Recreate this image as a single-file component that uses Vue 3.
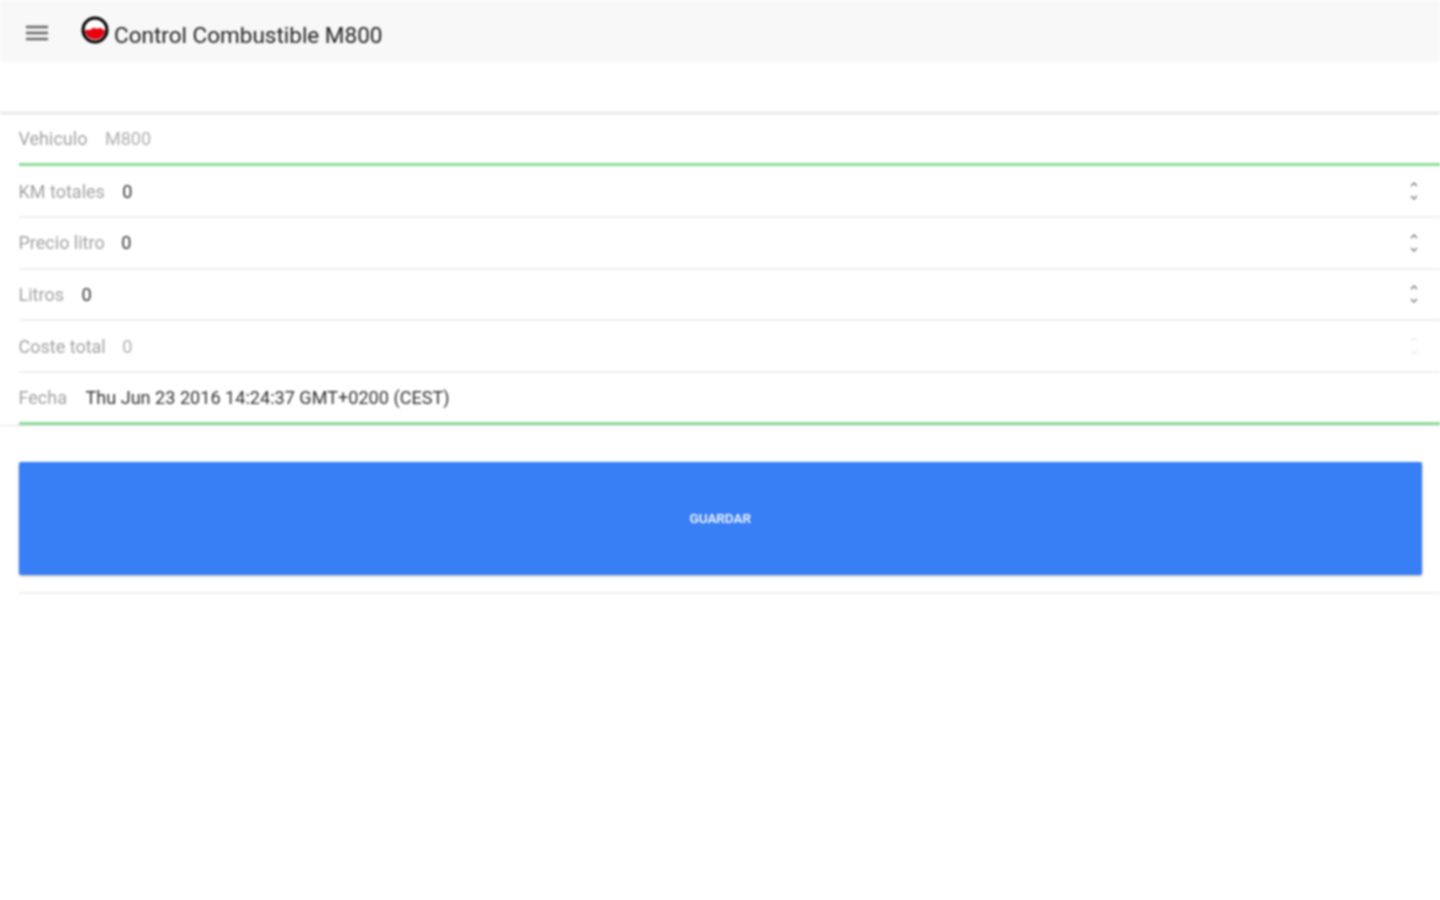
<script setup>
const rows = [
  { label: 'Vehiculo', value: 'M800', dim: true, gap: 17.5, line: 'green' },
  { label: 'KM totales', value: '0', spin: 'on', gap: 17.5, line: 'gray' },
  { label: 'Precio litro', value: '0', spin: 'on', gap: 16.5, line: 'gray' },
  { label: 'Litros', value: '0', spin: 'on', gap: 17.5, line: 'gray' },
  { label: 'Coste total', value: '0', spin: 'off', dim: true, gap: 16.5, line: 'gray' },
  { label: 'Fecha', value: 'Thu Jun 23 2016 14:24:37 GMT+0200 (CEST)', gap: 18.5, line: 'green' },
]
</script>

<template>
  <div class="page">
    <header class="bar">
      <button class="menu" aria-label="Menu">
        <svg width="22" height="16" viewBox="0 0 22 16">
          <path d="M0 2h22M0 8h22M0 14h22" stroke="#666" stroke-width="2.4" fill="none" />
        </svg>
      </button>
      <svg class="logo" width="28" height="28" viewBox="0 0 28 28">
        <circle cx="14" cy="14" r="12" fill="#fff" stroke="#000" stroke-width="3" />
        <path d="M3.7 15 C7 12 8 16 11 12.5 C13 10.5 15 13.5 17 12.5 C20 10.5 22 15 24.3 14 A10.4 10.4 0 0 1 3.7 15Z" fill="#e8000f" />
      </svg>
      <h1 class="title">Control Combustible M800</h1>
    </header>

    <div class="spacer"></div>

    <form class="list">
      <div v-for="r in rows" :key="r.label" class="row" :class="r.line">
        <span class="label">{{ r.label }}</span>
        <span class="value" :class="{ dim: r.dim }" :style="{ marginLeft: r.gap + 'px' }">{{ r.value }}</span>
        <span v-if="r.spin" class="spin" :class="r.spin">
          <svg width="8" height="20" viewBox="0 0 8 20">
            <path d="M1 5l3-3 3 3M1 15l3 3 3-3" stroke="currentColor" stroke-width="1.4" fill="none" />
          </svg>
        </span>
      </div>
    </form>

    <div class="action">
      <button class="save" type="button">GUARDAR</button>
    </div>
  </div>
</template>

<style scoped>
.page {
  min-height: 900px;
  background: #fff;
  font-family: Roboto, "Liberation Sans", sans-serif;
  filter: blur(0.8px);
}
.bar {
  height: 62px;
  background: #f8f8f8;
  display: flex;
  align-items: center;
  padding-left: 26px;
}
.menu {
  width: 22px;
  height: 16px;
  padding: 0;
  border: 0;
  background: none;
  display: flex;
  margin-top: 3px;
}
.logo {
  margin: 0 5px 2px 33px;
  flex: none;
}
.title {
  margin: 7px 0 0;
  font-size: 22.5px;
  font-weight: 400;
  color: #222;
}
.spacer {
  height: 48.5px;
  border-bottom: 4px solid #eee;
}
.list {
  padding-left: 18.5px;
  border-bottom: 1px solid #e2e2e2;
}
.row {
  height: 51.7px;
  box-sizing: border-box;
  display: flex;
  align-items: center;
  font-size: 18px;
  padding-right: 22px;
}
.row.gray { border-bottom: 2px solid #f0f0f0; }
.row.green { border-bottom: 3px solid #8cdc98; }
.label { color: #a2a2a2; }
.value { color: #333; font-size: 18.1px; }
.value.dim { color: #b0b0b0; }
.spin {
  margin-left: auto;
  display: flex;
  color: #777;
}
.spin.off { color: #ececec; }
.action {
  margin-left: 18.5px;
  padding: 36px 18px 17px 0;
  border-bottom: 2px solid #f0f0f0;
}
.save {
  display: block;
  width: 100%;
  height: 113px;
  border: 0;
  border-radius: 2px;
  background: #387ef5;
  color: #fff;
  font: 500 13.5px Roboto, "Liberation Sans", sans-serif;
  box-shadow: 0 1px 3px rgba(0, 0, 0, 0.3);
}
</style>
